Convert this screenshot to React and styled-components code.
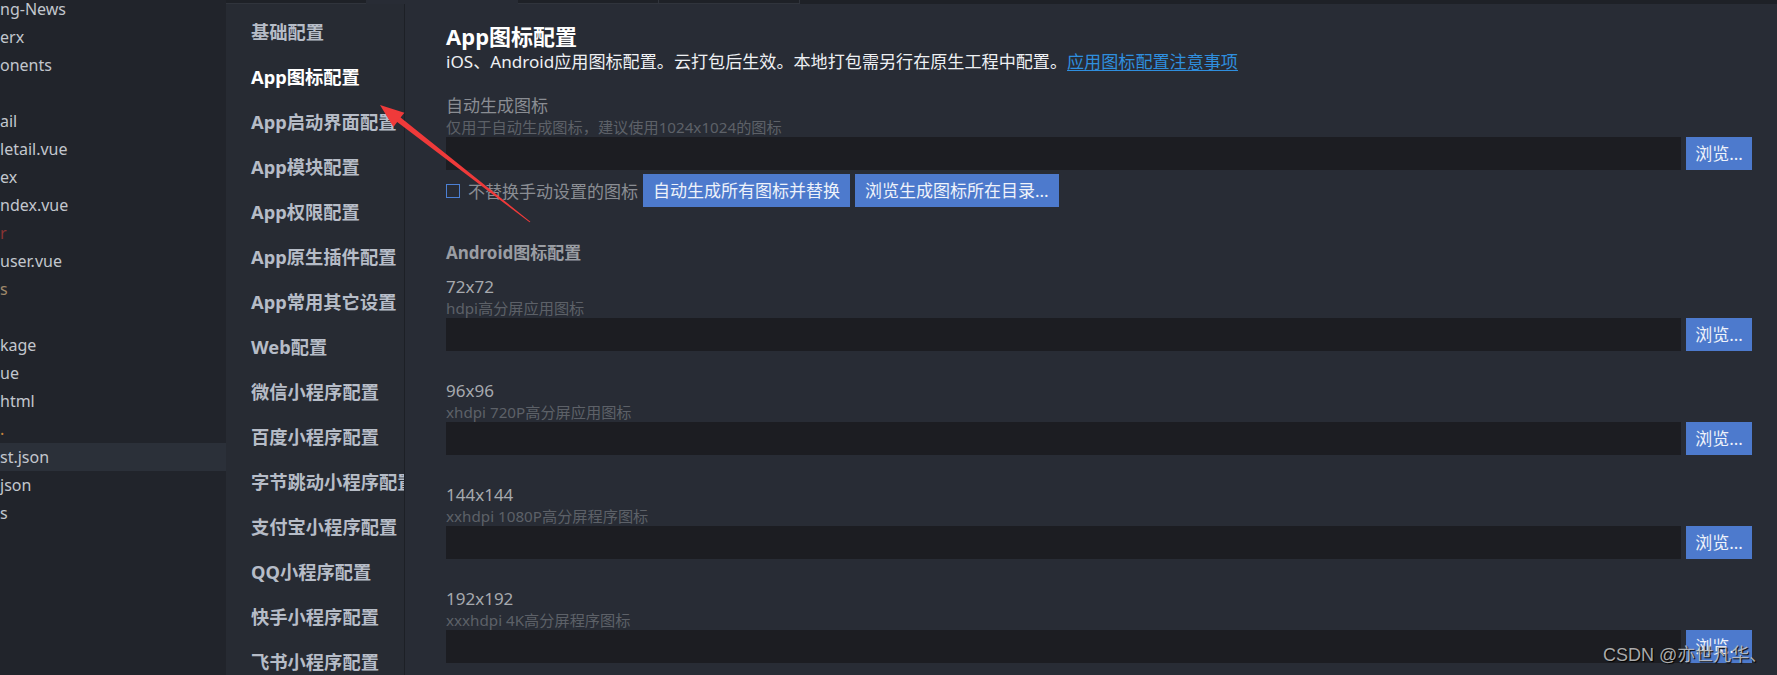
import styled, { createGlobalStyle } from "styled-components"

const GlobalStyle = createGlobalStyle`
  html, body {
    margin: 0;
    padding: 0;
    height: 100%;
    overflow: hidden;
    background: #21242b;
  }
  #root { height: 100%; }
`

const font = `"Noto Sans", "Noto Sans CJK SC", sans-serif`

const treeRows = [
  { text: "ng-News" },
  { text: "erx" },
  { text: "onents" },
  { text: "" },
  { text: "ail" },
  { text: "letail.vue" },
  { text: "ex" },
  { text: "ndex.vue" },
  { text: "r", color: "#8a3434" },
  { text: "user.vue" },
  { text: "s", color: "#a08a6c" },
  { text: "" },
  { text: "kage" },
  { text: "ue" },
  { text: "html" },
  { text: ".", color: "#c8843c" },
  { text: "st.json", active: true },
  { text: "json" },
  { text: "s" },
]

const navItems = [
  "基础配置", "App图标配置", "App启动界面配置", "App模块配置", "App权限配置",
  "App原生插件配置", "App常用其它设置", "Web配置", "微信小程序配置", "百度小程序配置",
  "字节跳动小程序配置", "支付宝小程序配置", "QQ小程序配置", "快手小程序配置", "飞书小程序配置",
]

const androidIcons = [
  { size: "72x72", hint: "hdpi高分屏应用图标" },
  { size: "96x96", hint: "xhdpi 720P高分屏应用图标" },
  { size: "144x144", hint: "xxhdpi 1080P高分屏程序图标" },
  { size: "192x192", hint: "xxxhdpi 4K高分屏程序图标" },
]

export default function App() {
  return (
    <>
      <GlobalStyle />
      <Page>
        <Tree>
          {treeRows.map((row, i) => (
            <TreeRow key={i} $active={row.active} $color={row.color}>{row.text}</TreeRow>
          ))}
        </Tree>
        <Main>
          <TabStrip>
            <Tab />
            <Tab $current />
            <Tab $bordered />
            <Tab $bordered />
          </TabStrip>
          <Body>
            <Nav>
              {navItems.map(item => (
                <NavItem key={item} $active={item === "App图标配置"}>{item}</NavItem>
              ))}
            </Nav>
            <Content>
              <Title>App图标配置</Title>
              <Desc>
                iOS、Android应用图标配置。云打包后生效。本地打包需另行在原生工程中配置。
                <Link href="#">应用图标配置注意事项</Link>
              </Desc>

              <Field $first>
                <FieldLabel>自动生成图标</FieldLabel>
                <FieldHint>仅用于自动生成图标，建议使用1024x1024的图标</FieldHint>
                <InputRow>
                  <PathInput />
                  <Button $narrow>浏览...</Button>
                </InputRow>
              </Field>
              <ActionRow>
                <Check />
                <CheckText>不替换手动设置的图标</CheckText>
                <Button>自动生成所有图标并替换</Button>
                <Button>浏览生成图标所在目录...</Button>
              </ActionRow>

              <SectionTitle>Android图标配置</SectionTitle>
              {androidIcons.map(icon => (
                <Field key={icon.size}>
                  <SizeLabel>{icon.size}</SizeLabel>
                  <FieldHint>{icon.hint}</FieldHint>
                  <InputRow>
                    <PathInput />
                    <Button $narrow>浏览...</Button>
                  </InputRow>
                </Field>
              ))}
            </Content>
          </Body>
        </Main>

        <Arrow width="1777" height="675" viewBox="0 0 1777 675">
          <polygon
            points="380,105 404.4,112.7 400.6,117.6 530.4,221.7 529.6,222.3 397.2,121.9 393.4,126.9"
            fill="#ef3a3a"
          />
        </Arrow>
        <Watermark>CSDN @亦世凡华、</Watermark>
      </Page>
    </>
  )
}

const Page = styled.div`
  position: relative;
  display: flex;
  height: 100%;
  font-family: ${font};
  overflow: hidden;
`

const Tree = styled.div`
  width: 226px;
  flex-shrink: 0;
  background: #21242b;
  margin-top: -5px;
  overflow: hidden;
`

const TreeRow = styled.div`
  height: 28px;
  line-height: 28px;
  font-size: 16px;
  white-space: nowrap;
  color: ${props => props.$color || "#c3c7ce"};
  background: ${props => props.$active ? "#2b3039" : "transparent"};
`

const Main = styled.div`
  flex: 1;
  display: flex;
  flex-direction: column;
  min-width: 0;
`

const TabStrip = styled.div`
  height: 4px;
  display: flex;
  background: #1e2127;
  flex-shrink: 0;
`

const Tab = styled.div`
  width: ${props => props.$current ? "152px" : "140px"};
  height: 3px;
  background: ${props => props.$current ? "#282c35" : "transparent"};
  border-right: ${props => props.$bordered ? "1px solid #30343c" : "none"};
  border-bottom: 1px solid ${props => props.$current ? "#282c35" : "#30343c"};
`

const Body = styled.div`
  flex: 1;
  display: flex;
  min-height: 0;
`

const Nav = styled.div`
  width: 179px;
  flex-shrink: 0;
  background: #272b33;
  border-right: 1px solid #1d2026;
  padding: 5px 0 0 25px;
  box-sizing: border-box;
  overflow: hidden;
`

const NavItem = styled.div`
  height: 45px;
  line-height: 45px;
  font-size: 18.3px;
  font-weight: 700;
  white-space: nowrap;
  color: ${props => props.$active ? "#ffffff" : "#b6bcc7"};
`

const Content = styled.div`
  flex: 1;
  background: #282c35;
  padding: 18px 25px 0 41px;
  min-width: 0;
`

const Title = styled.div`
  font-size: 22px;
  font-weight: 700;
  line-height: 28px;
  color: #ffffff;
`

const Desc = styled.div`
  margin-top: 1px;
  font-size: 17.1px;
  line-height: 22px;
  color: #eef0f3;
  white-space: nowrap;
`

const Link = styled.a`
  color: #2f8fdf;
  text-decoration: underline;
  text-underline-offset: 2px;
`

const Field = styled.div`
  margin-top: ${props => props.$first ? "22px" : "29px"};
`

const FieldLabel = styled.div`
  font-size: 17px;
  line-height: 22px;
  color: #8a8d93;
`

const SizeLabel = styled(FieldLabel)`
  color: #a6a9ae;
`

const FieldHint = styled.div`
  font-size: 15.2px;
  line-height: 20px;
  color: #5d6168;
  white-space: nowrap;
`

const InputRow = styled.div`
  display: flex;
  gap: 5px;
`

const PathInput = styled.div`
  flex: 1;
  height: 33px;
  background: #1c1d22;
`

const Button = styled.div`
  height: 33px;
  line-height: 33px;
  padding: 0 ${props => props.$narrow ? "9px" : "10px"};
  width: ${props => props.$narrow ? "66px" : "auto"};
  box-sizing: border-box;
  background: #4d7acd;
  color: #eef2fa;
  font-size: 17px;
  white-space: nowrap;
  text-align: center;
  flex-shrink: 0;
`

const ActionRow = styled.div`
  margin-top: 4px;
  display: flex;
  align-items: center;
  gap: 5px;
`

const Check = styled.div`
  width: 12px;
  height: 12px;
  border: 1px solid #4c80d4;
  flex-shrink: 0;
`

const CheckText = styled.span`
  margin-left: 3px;
  font-size: 17px;
  color: #8a8d93;
  white-space: nowrap;
`

const SectionTitle = styled.div`
  margin-top: 35px;
  margin-bottom: -17px;
  font-size: 17px;
  font-weight: 700;
  line-height: 22px;
  color: #9a9da3;
`

const Arrow = styled.svg`
  position: absolute;
  left: 0;
  top: 0;
  pointer-events: none;
`

const Watermark = styled.div`
  position: absolute;
  left: 1603px;
  top: 644px;
  font-family: "Liberation Sans", "Noto Sans CJK SC", sans-serif;
  font-size: 18px;
  line-height: 22px;
  color: rgba(200, 200, 200, 0.85);
  text-shadow: 1px 1px 1px #000;
  white-space: nowrap;
`
